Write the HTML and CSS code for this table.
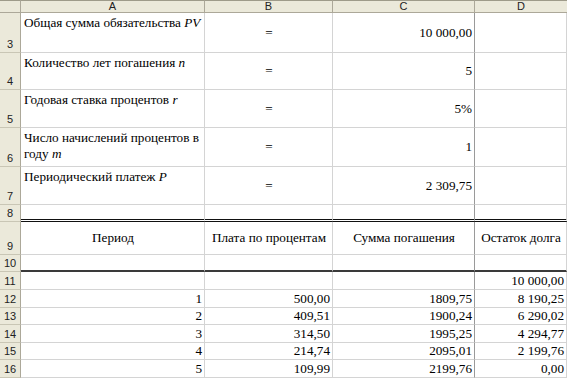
FILE: index.html
```html
<!DOCTYPE html>
<html lang="ru">
<head>
<meta charset="utf-8">
<link rel="stylesheet" href="styles.css">
</head>
<body>
<div class="sheet">
  <div class="ch corner"></div>
  <div class="ch">A</div>
  <div class="ch">B</div>
  <div class="ch">C</div>
  <div class="ch last">D</div>

  <div class="rh">3</div>
  <div class="c top">Общая сумма обязательства <i>PV</i></div>
  <div class="c mid">=</div>
  <div class="c num bc">10 000,00</div>
  <div class="c"></div>

  <div class="rh">4</div>
  <div class="c top">Количество лет погашения <i>n</i></div>
  <div class="c mid">=</div>
  <div class="c num bc">5</div>
  <div class="c"></div>

  <div class="rh">5</div>
  <div class="c top">Годовая ставка процентов <i>r</i></div>
  <div class="c mid">=</div>
  <div class="c num bc">5%</div>
  <div class="c"></div>

  <div class="rh">6</div>
  <div class="c top"><span class="ln">Число начислений процентов в</span><span class="ln">году <i>m</i></span></div>
  <div class="c mid">=</div>
  <div class="c num bc">1</div>
  <div class="c"></div>

  <div class="rh">7</div>
  <div class="c top">Периодический платеж <i>P</i></div>
  <div class="c mid">=</div>
  <div class="c num bc">2 309,75</div>
  <div class="c"></div>

  <div class="rh">8</div>
  <div class="c dbl"></div>
  <div class="c dbl"></div>
  <div class="c dbl bc"></div>
  <div class="c dbl"></div>

  <div class="rh">9</div>
  <div class="c mid">Период</div>
  <div class="c mid">Плата по процентам</div>
  <div class="c mid bc">Сумма погашения</div>
  <div class="c mid">Остаток долга</div>

  <div class="rh">10</div>
  <div class="c thick"></div>
  <div class="c thick"></div>
  <div class="c thick bc"></div>
  <div class="c thick"></div>

  <div class="rh">11</div>
  <div class="c"></div>
  <div class="c"></div>
  <div class="c bc"></div>
  <div class="c num">10 000,00</div>

  <div class="rh">12</div>
  <div class="c num">1</div>
  <div class="c num">500,00</div>
  <div class="c num bc">1809,75</div>
  <div class="c num">8 190,25</div>

  <div class="rh">13</div>
  <div class="c num">2</div>
  <div class="c num">409,51</div>
  <div class="c num bc">1900,24</div>
  <div class="c num">6 290,02</div>

  <div class="rh">14</div>
  <div class="c num">3</div>
  <div class="c num">314,50</div>
  <div class="c num bc">1995,25</div>
  <div class="c num">4 294,77</div>

  <div class="rh">15</div>
  <div class="c num">4</div>
  <div class="c num">214,74</div>
  <div class="c num bc">2095,01</div>
  <div class="c num">2 199,76</div>

  <div class="rh">16</div>
  <div class="c num">5</div>
  <div class="c num">109,99</div>
  <div class="c num bc">2199,76</div>
  <div class="c num">0,00</div>
</div>
</body>
</html>
```

FILE: styles.css
```css
* { box-sizing: border-box; }
html, body { margin: 0; padding: 0; background: #fff; overflow: hidden; }
.sheet {
  display: grid;
  grid-template-columns: 21px 184px 128px 142px 92px;
  grid-template-rows: 13px 40px 37px 38px 39px 38px 17px 33px 17px 18px 18px 17px 18px 17px 18px;
  font-family: "Liberation Serif", "Times New Roman", serif;
  font-size: 13.2px;
  color: #000;
}
.ch {
  background: #ebe9da;
  border-top: 1px solid #9e9b8a;
  border-bottom: 1px solid #aca899;
  border-right: 1px solid #aca899;
  font-family: "Liberation Sans", Arial, sans-serif;
  font-size: 11px;
  line-height: 11px;
  display: flex;
  align-items: center;
  justify-content: center;
  color: #222;
}
.ch.last { border-right: none; }
.rh {
  background: #ebe9da;
  border-right: 1px solid #aca899;
  border-bottom: 1px solid #c9c6b5;
  font-family: "Liberation Sans", Arial, sans-serif;
  font-size: 11px;
  line-height: 12px;
  color: #222;
  display: flex;
  align-items: flex-end;
  justify-content: center;
  padding-bottom: 2px;
}
.c {
  border-right: 1px solid #d4d4d4;
  border-bottom: 1px solid #d4d4d4;
  line-height: 16px;
  padding: 0 2px 0 3px;
  white-space: nowrap;
  overflow: hidden;
}
.c.bc { border-right-color: #9a9a9a; }
.sheet > .c:nth-child(5n+4) { border-right-color: #9a9a9a; }
.c.top {
  padding-top: 2px;
  overflow: visible;
}
.ln { display: block; height: 16px; }
.c.mid {
  display: flex;
  align-items: center;
  justify-content: center;
}
.c.num {
  display: flex;
  align-items: center;
  justify-content: flex-end;
  padding-right: 2px;
}
.c.dbl { border-bottom: 3px double #111; }
.c.thick { border-bottom: 2px solid #3a3a3a; }
i { font-style: italic; }
```
